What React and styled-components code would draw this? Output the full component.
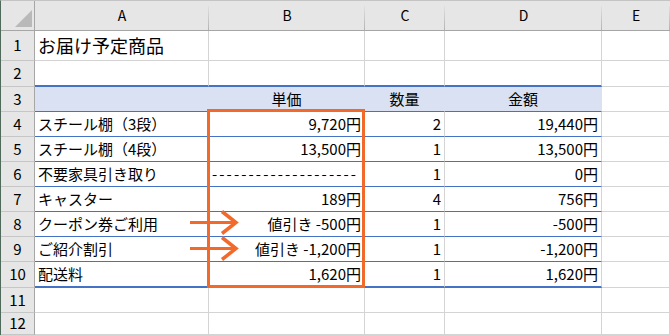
import React from 'react'
import styled, { createGlobalStyle, css } from 'styled-components'

const GlobalStyle = createGlobalStyle`
  html, body {
    margin: 0;
    padding: 0;
    background: #ffffff;
    overflow: hidden;
  }
  body {
    font-family: "Noto Sans CJK JP", "Noto Sans", sans-serif;
    color: #000;
  }
`

const BLUE = '#4472c4'
const FILL = '#d9e1f2'
const GRID = '#d4d4d4'
const ORANGE = '#f26a2b'

// row heights include each row's bottom border
const rowHeights = [30, 30, 26, 25, 25, 25, 25, 25, 25, 25, 26, 25, 22]

const Sheet = styled.div`
  position: relative;
  width: 670px;
  height: 335px;
  box-sizing: border-box;
  border-top: 1px solid #c4c4c4;
  border-left: 1px solid #4f6a5a;
  display: grid;
  grid-template-columns: 34px 174px 156px 80px 157px 1fr;
  grid-template-rows: ${rowHeights.map((h) => h + 'px').join(' ')};
  overflow: hidden;
`

const Corner = styled.div`
  position: relative;
  background: #e6e6e6;
  box-sizing: border-box;
  border-right: 1px solid #a6a6a6;
  border-bottom: 1px solid #a6a6a6;
  &::after {
    content: '';
    position: absolute;
    right: 2px;
    bottom: 3px;
    width: 0;
    height: 0;
    border-left: 17px solid transparent;
    border-bottom: 17px solid #b9b9b9;
  }
`

const ColHead = styled.div`
  position: relative;
  background: #e6e6e6;
  box-sizing: border-box;
  border-bottom: 1px solid #a6a6a6;
  display: flex;
  align-items: center;
  justify-content: center;
  font-size: 14px;
  padding-bottom: 1px;
  &::after {
    content: '';
    position: absolute;
    right: 0;
    top: 5px;
    bottom: 0;
    width: 1px;
    background: linear-gradient(#e0e0e0, #b4b4b4);
  }
`

const RowHead = styled.div`
  background: #e6e6e6;
  box-sizing: border-box;
  border-right: 1px solid #a6a6a6;
  border-bottom: 1px solid #c6c6c6;
  display: flex;
  align-items: center;
  justify-content: center;
  font-size: 15px;
  padding-bottom: 2px;
`

const lineStyles = {
  grid: css`border-bottom: 1px solid ${GRID};`,
  blue: css`border-bottom: 1px solid ${BLUE};`,
  thick: css`border-bottom: 2px solid ${BLUE};`,
}

const Cell = styled.div`
  box-sizing: border-box;
  min-width: 0;
  overflow: hidden;
  white-space: nowrap;
  display: flex;
  align-items: center;
  padding: 0 3px 2px 3px;
  font-size: ${(p) => p.$size || 15}px;
  background: ${(p) => (p.$fill ? FILL : '#fff')};
  border-right: 1px solid ${(p) => (p.$fill ? FILL : GRID)};
  justify-content: ${(p) =>
    p.$align === 'right' ? 'flex-end' : p.$align === 'center' ? 'center' : 'flex-start'};
  ${(p) => lineStyles[p.$line || 'grid']}
`

const Dashes = styled.span`
  letter-spacing: 2.1px;
`

const Highlight = styled.div`
  position: absolute;
  left: 206px;
  top: 108px;
  width: 158px;
  height: 179px;
  box-sizing: border-box;
  border: 3px solid ${ORANGE};
  pointer-events: none;
`

const ArrowSvg = styled.svg`
  position: absolute;
  left: 187px;
  top: ${(p) => p.$top}px;
  width: 52px;
  height: 26px;
  overflow: visible;
  pointer-events: none;
`

const Arrow = ({ top }) => (
  <ArrowSvg $top={top} viewBox="0 0 52 26">
    <line x1="2" y1="12.5" x2="46" y2="12.5" stroke={ORANGE} strokeWidth="3" />
    <polyline
      points="34,1.5 48,12.5 34,23.5"
      fill="none"
      stroke={ORANGE}
      strokeWidth="3.5"
    />
  </ArrowSvg>
)

const cols = ['A', 'B', 'C', 'D', 'E']

const items = [
  ['スチール棚（3段）', '9,720円', '2', '19,440円'],
  ['スチール棚（4段）', '13,500円', '1', '13,500円'],
  ['不要家具引き取り', null, '1', '0円'],
  ['キャスター', '189円', '4', '756円'],
  ['クーポン券ご利用', '値引き -500円', '1', '-500円'],
  ['ご紹介割引', '値引き -1,200円', '1', '-1,200円'],
  ['配送料', '1,620円', '1', '1,620円'],
]

const App = () => {
  return (
    <>
      <GlobalStyle />
      <Sheet>
        <Corner />
        {cols.map((c) => (
          <ColHead key={c}>{c}</ColHead>
        ))}

        <RowHead>1</RowHead>
        <Cell $size={18}>お届け予定商品</Cell>
        <Cell />
        <Cell />
        <Cell />
        <Cell />

        <RowHead>2</RowHead>
        <Cell $line="thick" />
        <Cell $line="thick" />
        <Cell $line="thick" />
        <Cell $line="thick" />
        <Cell />

        <RowHead>3</RowHead>
        <Cell $fill $line="blue" />
        <Cell $fill $line="blue" $align="center">単価</Cell>
        <Cell $fill $line="blue" $align="center">数量</Cell>
        <Cell $fill $line="blue" $align="center">金額</Cell>
        <Cell />

        {items.map(([name, price, qty, total], i) => {
          const line = i === items.length - 1 ? 'thick' : 'blue'
          return (
            <React.Fragment key={name}>
              <RowHead>{i + 4}</RowHead>
              <Cell $line={line}>{name}</Cell>
              <Cell $line={line} $align={price ? 'right' : 'left'}>
                {price || <Dashes>{'-'.repeat(20)}</Dashes>}
              </Cell>
              <Cell $line={line} $align="right">{qty}</Cell>
              <Cell $line={line} $align="right">{total}</Cell>
              <Cell />
            </React.Fragment>
          )
        })}

        {[11, 12].map((n) => (
          <React.Fragment key={n}>
            <RowHead>{n}</RowHead>
            <Cell />
            <Cell />
            <Cell />
            <Cell />
            <Cell />
          </React.Fragment>
        ))}

        <Highlight />
        <Arrow top={209} />
        <Arrow top={235} />
      </Sheet>
    </>
  )
}

export default App
